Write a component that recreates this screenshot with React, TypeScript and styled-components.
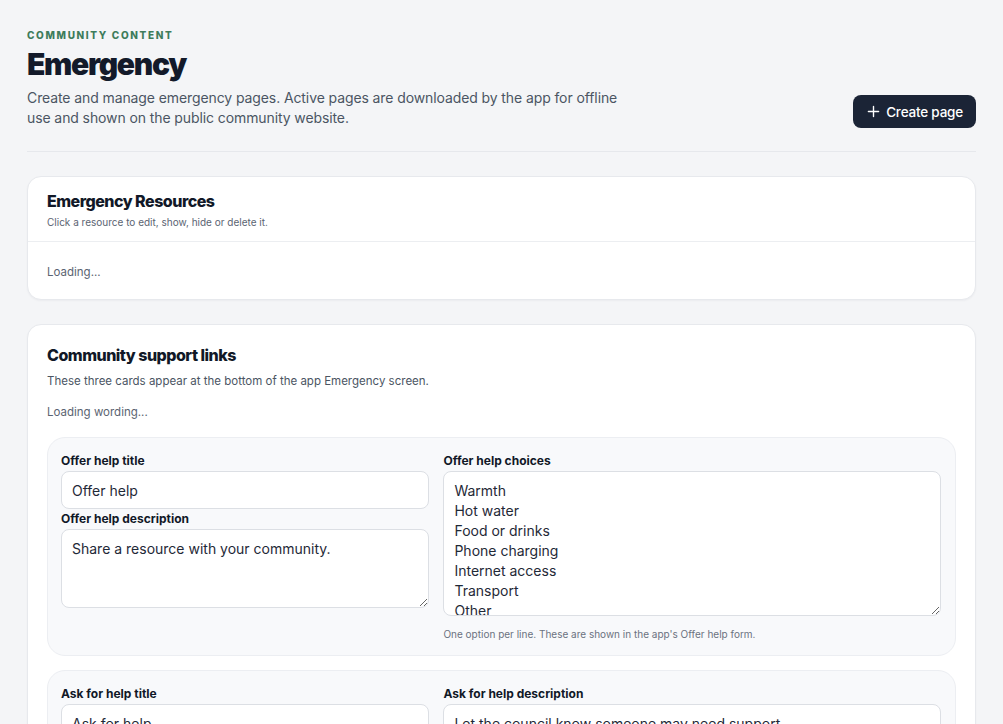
import React from "react";
import styled, { createGlobalStyle } from "styled-components";

const Global = createGlobalStyle`
  html, body { margin: 0; padding: 0; background: #f4f5f7; }
  body { font-family: Inter, "Noto Sans", "Liberation Sans", sans-serif; color: #111827; -webkit-font-smoothing: antialiased; }
  * { box-sizing: border-box; }
`;

const Page = styled.div`
  padding: 27px 27px 40px 27px;
  display: flex;
  flex-direction: column;
  gap: 24px;
`;

const Header = styled.header`
  display: flex;
  align-items: flex-end;
  justify-content: space-between;
  padding-bottom: 23px;
  border-bottom: 1px solid #e6e8ec;
`;

const HeaderText = styled.div`
  display: flex;
  flex-direction: column;
`;

const Eyebrow = styled.div`
  font-size: 10px;
  line-height: 16px;
  font-weight: 800;
  letter-spacing: 1.65px;
  text-transform: uppercase;
  color: #3e7c5b;
`;

const Title = styled.h1`
  margin: 2px 0 0;
  font-size: 30px;
  line-height: 38px;
  font-weight: 900;
  letter-spacing: -1.3px;
  color: #131a2a;
`;

const Lead = styled.p`
  margin: 5px 0 0;
  max-width: 640px;
  font-size: 14px;
  line-height: 20px;
  letter-spacing: -0.1px;
  color: #4b5563;
`;

const PrimaryButton = styled.button`
  display: inline-flex;
  align-items: center;
  gap: 6px;
  height: 33px;
  padding: 0 13px 0 14px;
  border: none;
  border-radius: 8px;
  background: #1b2436;
  color: #ffffff;
  font-family: inherit;
  font-size: 13.5px;
  font-weight: 500;
  letter-spacing: -0.2px;
  cursor: pointer;
`;

const Card = styled.section`
  background: #ffffff;
  border: 1px solid #e7e9ed;
  border-radius: 14px;
  box-shadow: 0 1px 2px rgba(16, 24, 40, 0.04);
`;

const CardHead = styled.div`
  padding: 12px 19px 11px;
  border-bottom: 1px solid #eceef1;
`;

const CardTitle = styled.h2`
  margin: 0;
  font-size: 16px;
  line-height: 24px;
  font-weight: 800;
  letter-spacing: -0.5px;
  color: #111827;
`;

const SmallNote = styled.p`
  margin: 1px 0 0;
  font-size: 10px;
  line-height: 16px;
  color: #5b6472;
`;

const CardBody = styled.div`
  padding: 21px 19px 18px;
  font-size: 11.5px;
  line-height: 18px;
  color: #5b6472;
`;

const LinksCard = styled(Card)`
  padding: 18px 19px 20px;
`;

const Sub = styled.p`
  margin: 5px 0 0;
  font-size: 11.5px;
  line-height: 18px;
  color: #4b5563;
`;

const Muted = styled.p`
  margin: 13px 0 0;
  font-size: 11.5px;
  line-height: 18px;
  color: #5b6472;
`;

const Groups = styled.div`
  margin-top: 16px;
  display: flex;
  flex-direction: column;
  gap: 14px;
`;

const Group = styled.div`
  background: #f8f9fb;
  border: 1px solid #eceef2;
  border-radius: 18px;
  padding: 15px 14px 14px 13px;
  display: grid;
  grid-template-columns: 368fr 497fr;
  column-gap: 14px;
`;

const Column = styled.div`
  display: flex;
  flex-direction: column;
  gap: 2px;
`;

const Field = styled.div`
  display: flex;
  flex-direction: column;
  gap: 2px;
`;

const Label = styled.label`
  font-size: 12px;
  line-height: 16px;
  font-weight: 700;
  color: #111827;
`;

const Input = styled.input`
  height: 38px;
  padding: 0 10px;
  border: 1px solid #dcdfe4;
  border-radius: 8px;
  background: #ffffff;
  font-family: inherit;
  font-size: 14px;
  color: #1f2937;
  outline: none;
`;

const TextArea = styled.textarea<{ $h: number }>`
  height: ${(p) => p.$h}px;
  padding: 9px 10px;
  border: 1px solid #dcdfe4;
  border-radius: 8px;
  background: #ffffff;
  font-family: inherit;
  font-size: 14px;
  line-height: 20px;
  color: #1f2937;
  outline: none;
  resize: vertical;
  overflow: hidden;
`;

const Hint = styled.p`
  margin: 9px 0 0;
  font-size: 10px;
  line-height: 14px;
  color: #6b7280;
`;

const PlusIcon = () => (
  <svg width="13" height="13" viewBox="0 0 14 14" fill="none" stroke="currentColor" strokeWidth="1.5" strokeLinecap="round">
    <path d="M7 1.5v11M1.5 7h11" />
  </svg>
);

const choices = ["Warmth", "Hot water", "Food or drinks", "Phone charging", "Internet access", "Transport", "Other"].join("\n");

export default function App() {
  return (
    <>
      <Global />
      <Page>
        <Header>
          <HeaderText>
            <Eyebrow>Community content</Eyebrow>
            <Title>Emergency</Title>
            <Lead>
              Create and manage emergency pages. Active pages are downloaded by the app for offline
              <br />
              use and shown on the public community website.
            </Lead>
          </HeaderText>
          <PrimaryButton>
            <PlusIcon />
            Create page
          </PrimaryButton>
        </Header>

        <Card>
          <CardHead>
            <CardTitle>Emergency Resources</CardTitle>
            <SmallNote>Click a resource to edit, show, hide or delete it.</SmallNote>
          </CardHead>
          <CardBody>Loading...</CardBody>
        </Card>

        <LinksCard>
          <CardTitle>Community support links</CardTitle>
          <Sub>These three cards appear at the bottom of the app Emergency screen.</Sub>
          <Muted>Loading wording...</Muted>
          <Groups>
            <Group>
              <Column>
                <Field>
                  <Label>Offer help title</Label>
                  <Input defaultValue="Offer help" />
                </Field>
                <Field>
                  <Label>Offer help description</Label>
                  <TextArea $h={79} defaultValue="Share a resource with your community." />
                </Field>
              </Column>
              <Column>
                <Field>
                  <Label>Offer help choices</Label>
                  <TextArea $h={145} defaultValue={choices} />
                </Field>
                <Hint>One option per line. These are shown in the app's Offer help form.</Hint>
              </Column>
            </Group>
            <Group>
              <Column>
                <Field>
                  <Label>Ask for help title</Label>
                  <Input defaultValue="Ask for help" />
                </Field>
                <Field>
                  <Label>Ask for help description</Label>
                  <TextArea $h={79} defaultValue="Let the council know someone may need support." />
                </Field>
              </Column>
              <Column>
                <Field>
                  <Label>Ask for help description</Label>
                  <TextArea $h={79} defaultValue="Let the council know someone may need support." />
                </Field>
              </Column>
            </Group>
          </Groups>
        </LinksCard>
      </Page>
    </>
  );
}
